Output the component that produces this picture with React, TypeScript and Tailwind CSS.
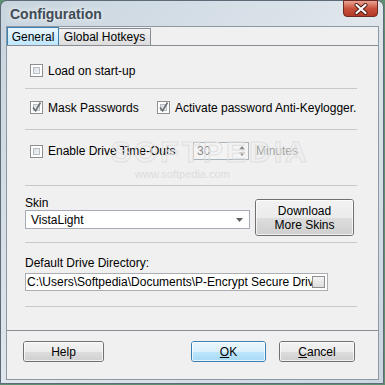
import React from 'react';

const CheckBox: React.FC<{ checked?: boolean }> = ({ checked }) => (
  <div className="relative w-[13px] h-[13px] shrink-0 border border-[#8f8f8f] bg-white p-[2px]">
    <div className="w-full h-full border border-[#b9bec4] bg-gradient-to-br from-[#d6dce2] to-[#f4f6f8]" />
    {checked && (
      <svg className="absolute -left-px -top-[2px]" width="13" height="14" viewBox="0 0 13 14">
        <path d="M3 7.5 L5.6 10.8 L10.5 2.5" fill="none" stroke="#6f7378" strokeWidth="1.7" />
      </svg>
    )}
  </div>
);

const Separator = ({ className = '' }: { className?: string }) => (
  <div className={`w-[332px] h-px bg-[#c9c9c9] ${className}`} />
);

const VistaButton: React.FC<{ children: React.ReactNode; className?: string; primary?: boolean }> = ({ children, className = '', primary }) => (
  <div
    className={`relative flex flex-col items-center justify-center rounded-[3px] border text-[12px] leading-[14px] text-black overflow-hidden ${
      primary ? 'border-[#3c7fb1]' : 'border-[#707070]'
    } ${className}`}
  >
    <div className="absolute inset-0 flex flex-col">
      <div className={`flex-1 ${primary ? 'bg-gradient-to-b from-[#eaf6fd] to-[#d9f0fc]' : 'bg-gradient-to-b from-[#f2f2f2] to-[#ebebeb]'}`} />
      <div className={`flex-1 ${primary ? 'bg-gradient-to-b from-[#bee6fd] to-[#a7d9f5]' : 'bg-gradient-to-b from-[#dddddd] to-[#cfcfcf]'}`} />
    </div>
    <div className="absolute inset-0 rounded-[2px] border border-white/70" />
    <div className="relative flex flex-col items-center">{children}</div>
  </div>
);

export default function App() {
  return (
    <div className="w-[385px] h-[385px] bg-[#5f8f72] font-['Liberation_Sans',Arial,sans-serif]">
      <div className="w-[384px] h-[384px] rounded-t-[7px] border border-[#5d6b78] bg-gradient-to-br from-[#c8d4de] via-[#dfe6ec] to-[#cbd6df] flex flex-col">
        {/* title bar */}
        <div className="h-[25px] flex items-start justify-between">
          <div className="pl-[9px] pt-[5px] text-[14px] leading-[16px] font-bold text-[#404b56] [text-shadow:0_0_6px_#ffffff]">
            Configuration
          </div>
          <div className="mt-[-1px] mr-[5px] w-[35px] h-[17px] rounded-b-[4px] border border-[#6b2a22] bg-gradient-to-b from-[#e8a293] via-[#c9503c] to-[#b33a26] flex items-center justify-center">
            <svg width="16" height="12" viewBox="0 0 16 12">
              <path d="M3.5 2 L12.5 10 M12.5 2 L3.5 10" stroke="#4a1b14" strokeWidth="4" strokeLinecap="round" />
              <path d="M3.5 2 L12.5 10 M12.5 2 L3.5 10" stroke="#ffffff" strokeWidth="2.2" strokeLinecap="round" />
            </svg>
          </div>
        </div>

        {/* client area */}
        <div className="ml-[5px] w-[373px] h-[354px] border border-[#8c98a3] bg-[#f0f0f0] flex flex-col text-[12px] leading-[14px] text-black">
          {/* tabs */}
          <div className="h-[18px] flex items-end">
            <div className="w-[52px] h-[18px] border border-b-0 border-[#3c7fb1] bg-gradient-to-b from-[#eaf6fd] to-[#bee6fd] flex items-center justify-center">
              General
            </div>
            <div className="w-[92px] h-[17px] border border-l-0 border-b-0 border-[#898c95] bg-gradient-to-b from-[#f2f2f2] to-[#dcdcdc] flex items-center justify-center">
              Global Hotkeys
            </div>
          </div>

          {/* tab panel */}
          <div className="relative h-[286px] border-t border-b border-[#898c95] pl-[18px] flex flex-col">
            <div className="mt-[18px] h-[13px] pl-[5px] flex items-center gap-[5px]">
              <CheckBox />
              <span>Load on start-up</span>
            </div>
            <Separator className="mt-[11px]" />

            <div className="mt-[12px] h-[13px] pl-[5px] flex items-center">
              <div className="w-[127px] flex items-center gap-[5px]">
                <CheckBox checked />
                <span>Mask Passwords</span>
              </div>
              <div className="flex items-center gap-[5px]">
                <CheckBox checked />
                <span>Activate password Anti-Keylogger.</span>
              </div>
            </div>
            <Separator className="mt-[15px]" />

            <div className="mt-[12px] h-[18px] pl-[5px] flex items-center">
              <div className="w-[163px] flex items-center gap-[5px]">
                <CheckBox />
                <span>Enable Drive Time-Outs</span>
              </div>
              <div className="w-[56px] h-[18px] border border-[#a9b3bc] bg-[#f4f4f4] flex items-center justify-between pl-[3px] pr-[1px]">
                <span className="text-[#8a8a8a]">30</span>
                <svg width="10" height="14" viewBox="0 0 10 14">
                  <path d="M2 5.5 L5 2 L8 5.5 Z" fill="#8c8c8c" />
                  <path d="M2 8.5 L5 12 L8 8.5 Z" fill="#8c8c8c" />
                </svg>
              </div>
              <span className="ml-[7px] text-[#a3a3a3]">Minutes</span>
            </div>
            <Separator className="mt-[25px]" />

            <div className="mt-[10px] h-[40px] flex items-start">
              <div className="w-[225px] flex flex-col">
                <div className="h-[14px]">Skin</div>
                <div className="h-[19px] border border-[#a5acb5] bg-white flex items-center justify-between pl-[5px] pr-[6px]">
                  <span>VistaLight</span>
                  <svg width="7" height="4" viewBox="0 0 7 4">
                    <path d="M0 0 L7 0 L3.5 4 Z" fill="#606060" />
                  </svg>
                </div>
              </div>
              <VistaButton className="ml-[5px] mt-[3px] w-[99px] h-[37px]">
                <span>Download</span>
                <span>More Skins</span>
              </VistaButton>
            </div>
            <Separator className="mt-[6px]" />

            <div className="mt-[13px] h-[14px]">Default Drive Directory:</div>
            <div className="mt-[3px] w-[303px] h-[18px] border border-[#abadb3] bg-white flex items-center pl-[1px] pr-[2px]">
              <span className="flex-1 overflow-hidden whitespace-nowrap">
                C:\Users\Softpedia\Documents\P-Encrypt Secure Drives
              </span>
              <div className="w-[13px] h-[12px] shrink-0 border border-[#8f8f8f] bg-gradient-to-b from-[#f4f4f4] to-[#dedede]" />
            </div>
            <Separator className="mt-[15px]" />

            {/* watermark overlay */}
            <div className="pointer-events-none absolute left-[104px] top-[90px] text-[30px] leading-[32px] font-bold tracking-[3px] text-transparent [-webkit-text-stroke:1px_#e0e0e0]">
              SOFTPEDIA
            </div>
            <div className="pointer-events-none absolute left-[128px] top-[122px] text-[11px] leading-[12px] text-[#dcdcdc]">
              www.softpedia.com
            </div>
          </div>

          {/* bottom buttons */}
          <div className="pt-[10px] pl-[16px] flex">
            <VistaButton className="w-[81px] h-[21px]">Help</VistaButton>
            <VistaButton primary className="ml-[87px] w-[75px] h-[21px]">
              <span><span className="underline">O</span>K</span>
            </VistaButton>
            <VistaButton className="ml-[13px] w-[76px] h-[21px]">
              <span><span className="underline">C</span>ancel</span>
            </VistaButton>
          </div>
        </div>
      </div>
    </div>
  );
}
